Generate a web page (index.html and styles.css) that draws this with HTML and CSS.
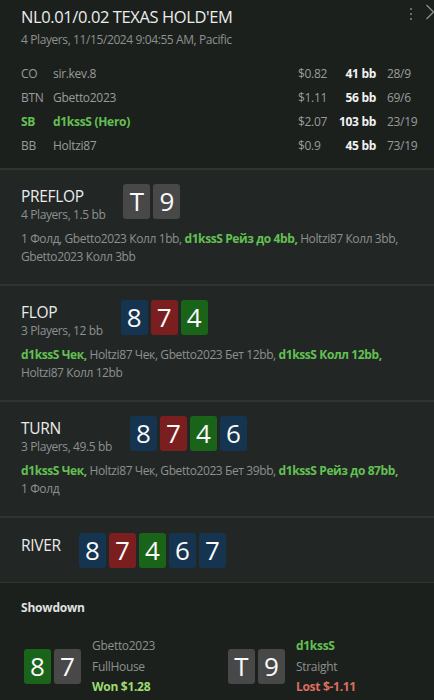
FILE: index.html
```html
<!DOCTYPE html>
<html lang="en">

<head>
    <meta charset="UTF-8">
    <meta name="viewport" content="width=device-width, initial-scale=1.0">
    <title>Hand history</title>
    <link rel="stylesheet" href="styles.css">
</head>

<body>
    <div id="hand">
        <div class="header">
            <div class="tools">
                <svg class="dots" width="4" height="14" viewBox="0 0 4 14">
                    <rect x="1" y="1" width="2" height="2" fill="#6a6e6b" />
                    <rect x="1" y="6" width="2" height="2" fill="#6a6e6b" />
                    <rect x="1" y="11" width="2" height="2" fill="#6a6e6b" />
                </svg>
                <svg class="close" width="8" height="16" viewBox="0 0 8 16">
                    <path d="M0.5 1 L7.5 8 L0.5 15" stroke="#8a8e8b" stroke-width="1.3" fill="none" />
                </svg>
            </div>
            <h1>NL0.01/0.02 TEXAS HOLD'EM</h1>
            <div class="sub">4 Players, 11/15/2024 9:04:55 AM, Pacific</div>
            <ul class="players">
                <li><span class="pos">CO</span><span class="name">sir.kev.8</span><span class="stack">$0.82</span><b class="bb">41 bb</b><span class="stat">28/9</span></li>
                <li><span class="pos">BTN</span><span class="name">Gbetto2023</span><span class="stack">$1.11</span><b class="bb">56 bb</b><span class="stat">69/6</span></li>
                <li class="hero"><span class="pos">SB</span><span class="name">d1kssS (Hero)</span><span class="stack">$2.07</span><b class="bb">103 bb</b><span class="stat">23/19</span></li>
                <li><span class="pos">BB</span><span class="name">Holtzi87</span><span class="stack">$0.9</span><b class="bb">45 bb</b><span class="stat">73/19</span></li>
            </ul>
        </div>

        <div class="street">
            <div class="street-head">
                <div class="street-title">
                    <h2>PREFLOP</h2>
                    <div class="sub">4 Players, 1.5 bb</div>
                </div>
                <div class="cards">
                    <span class="card grey">T</span><span class="card grey">9</span>
                </div>
            </div>
            <p class="actions">1&nbsp;Фолд, Gbetto2023 Колл 1bb, <b>d1kssS Рейз до 4bb,</b> Holtzi87 Колл 3bb, Gbetto2023 Колл 3bb</p>
        </div>

        <div class="street">
            <div class="street-head">
                <div class="street-title">
                    <h2>FLOP</h2>
                    <div class="sub">3 Players, 12 bb</div>
                </div>
                <div class="cards">
                    <span class="card blue">8</span><span class="card red">7</span><span class="card green">4</span>
                </div>
            </div>
            <p class="actions"><b>d1kssS Чек,</b> Holtzi87 Чек, Gbetto2023 Бет 12bb, <b>d1kssS Колл 12bb,</b> Holtzi87 Колл 12bb</p>
        </div>

        <div class="street">
            <div class="street-head">
                <div class="street-title">
                    <h2>TURN</h2>
                    <div class="sub">3 Players, 49.5 bb</div>
                </div>
                <div class="cards">
                    <span class="card blue">8</span><span class="card red">7</span><span class="card green">4</span><span class="card blue">6</span>
                </div>
            </div>
            <p class="actions"><b>d1kssS Чек,</b> Holtzi87 Чек, Gbetto2023 Бет 39bb, <b>d1kssS Рейз до 87bb,</b> 1&nbsp;Фолд</p>
        </div>

        <div class="street river">
            <div class="street-head">
                <div class="street-title">
                    <h2>RIVER</h2>
                </div>
                <div class="cards">
                    <span class="card blue">8</span><span class="card red">7</span><span class="card green">4</span><span class="card blue">6</span><span class="card blue">7</span>
                </div>
            </div>
        </div>

        <div class="showdown">
            <h3>Showdown</h3>
            <div class="hands">
                <div class="hand">
                    <div class="cards">
                        <span class="card green">8</span><span class="card grey">7</span>
                    </div>
                    <div class="info">
                        <div>Gbetto2023</div>
                        <div>FullHouse</div>
                        <div class="won">Won $1.28</div>
                    </div>
                </div>
                <div class="hand">
                    <div class="cards">
                        <span class="card grey">T</span><span class="card grey">9</span>
                    </div>
                    <div class="info">
                        <div class="me">d1kssS</div>
                        <div>Straight</div>
                        <div class="lost">Lost $-1.11</div>
                    </div>
                </div>
            </div>
        </div>
    </div>
</body>

</html>
```

FILE: styles.css
```css
* {
    margin: 0;
    padding: 0;
}

ul {
    list-style: none;
}

body {
    background: #1c201d;
    font-family: "Open Sans", "Noto Sans", sans-serif;
    color: #9a9c9b;
    overflow: hidden;
}

#hand {
    width: 434px;
    height: 700px;
}

/* header */

.header {
    position: relative;
    background: #1c201d;
    padding: 6px 13px 10px 21px;
    border-bottom: 2px solid #2e3431;
}

.tools {
    position: absolute;
    top: 4px;
    right: 0;
    display: flex;
    gap: 13px;
}

.dots {
    margin-top: 3px;
}

h1 {
    font-size: 16.5px;
    font-weight: 400;
    color: #ebeceb;
    letter-spacing: -0.4px;
    line-height: 22px;
}

.sub {
    font-size: 12px;
    color: #8e908f;
    letter-spacing: -0.4px;
    line-height: 18px;
}

.header .sub {
    margin-top: 3px;
}

.players {
    margin-top: 13px;
    font-size: 12px;
    letter-spacing: -0.3px;
}

.players li {
    display: grid;
    grid-template-columns: 32px 1fr 40px 38px 45px;
    height: 24px;
    line-height: 24px;
}

.players .bb {
    text-align: right;
    color: #f2f2f2;
}

.players .stat {
    padding-left: 11px;
}

.players .hero .pos,
.players .hero .name {
    color: #63c052;
    font-weight: 700;
}

/* streets */

.street {
    background: #222726;
    padding: 14px 13px 10px 21px;
    border-bottom: 2px solid #2e3431;
    height: 116px;
    box-sizing: border-box;
}

.street-head {
    display: flex;
    gap: 18px;
    align-items: flex-start;
}

.street-title {
    padding-top: 2px;
}

h2 {
    font-size: 15.5px;
    font-weight: 400;
    color: #ebeceb;
    letter-spacing: -0.3px;
    line-height: 20px;
}

.cards {
    display: flex;
    gap: 3px;
}

.card {
    width: 27px;
    height: 35px;
    border-radius: 3px;
    color: #fafafa;
    font-size: 26px;
    line-height: 35px;
    text-align: center;
}

.card.grey {
    background: #484848;
}

.card.blue {
    background: #14344f;
}

.card.red {
    background: #7a1e1f;
}

.card.green {
    background: #1a641a;
}

.actions {
    margin-top: 6px;
    font-size: 12px;
    line-height: 18px;
    letter-spacing: -0.4px;
    color: #8e908f;
}

.actions b {
    color: #63c052;
}

.street.river {
    height: 65px;
    padding-top: 15px;
    border-bottom: 1px solid #2e3431;
}

/* showdown */

.showdown {
    background: #1c201d;
    padding: 16px 13px 0 21px;
}

h3 {
    font-size: 12px;
    font-weight: 700;
    color: #e0e1e0;
    letter-spacing: -0.2px;
}

.hands {
    display: grid;
    grid-template-columns: 204px 1fr;
    margin-top: 20px;
    padding-left: 3px;
}

.hand {
    display: flex;
    align-items: center;
    gap: 11px;
}

.info {
    font-size: 12px;
    line-height: 20.5px;
    letter-spacing: -0.3px;
    color: #8e908f;
}

.info .me {
    color: #63c052;
    font-weight: 700;
}

.info .won {
    color: #9ddb6f;
    font-weight: 700;
}

.info .lost {
    color: #dc6e5e;
    font-weight: 700;
}
```
